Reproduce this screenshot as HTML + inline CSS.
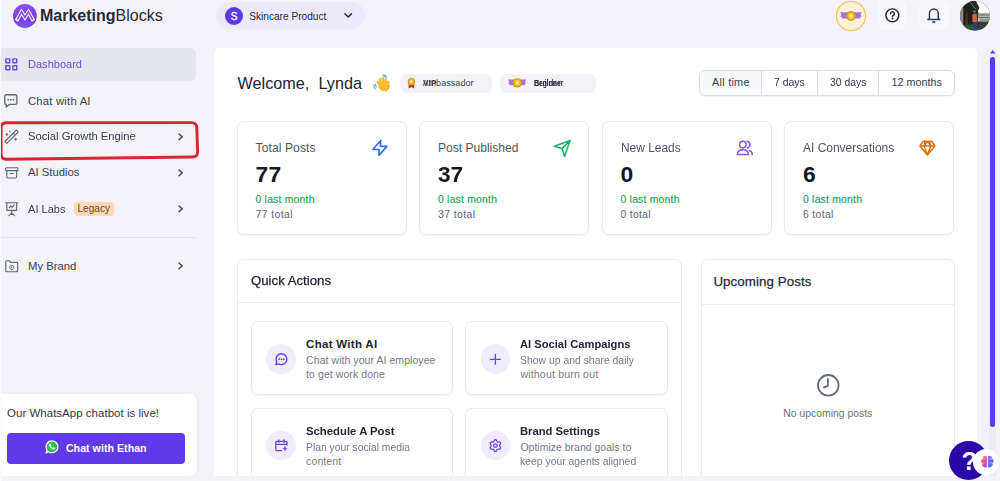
<!DOCTYPE html>
<html lang="en">
<head>
<meta charset="utf-8">
<title>MarketingBlocks Dashboard</title>
<style>
*{box-sizing:border-box;margin:0;padding:0}
html,body{width:1000px;height:481px;overflow:hidden}
body{background:#f3f2f8;font-family:"Liberation Sans",sans-serif;color:#1f2937;position:relative}
.a{position:absolute}
.t{position:absolute;white-space:pre;line-height:1;transform-origin:0 50%}
svg{position:absolute;overflow:visible}
.card{position:absolute;background:#fff;border:1px solid #e8eaef;border-radius:7px;box-shadow:0 1px 2px rgba(16,24,40,.05)}
.ic{position:absolute;width:29.5px;height:29.5px;border-radius:50%;background:#f0ebfd}
</style>
</head>
<body>

<div class="a" style="left:214px;top:47.500px;width:763px;height:428.500px;background:#fff;border-radius:5px 5px 0 0"></div>
<div class="a" style="left:988.600px;top:48px;width:7.800px;height:428px;background:#ececf1"></div>
<!-- logo -->
<svg style="left:12.8px;top:3.7px" width="23.8" height="23.8" viewBox="0 0 24 24">
<defs><linearGradient id="lg" x1="0" y1="0" x2="0.3" y2="1"><stop offset="0" stop-color="#9a4ff0"/><stop offset="1" stop-color="#6a35ee"/></linearGradient>
<clipPath id="lc"><circle cx="12" cy="12" r="12"/></clipPath></defs>
<circle cx="12" cy="12" r="12" fill="url(#lg)"/>
<path d="M0 17.300h24v7h-24z" fill="#7d4cf5" clip-path="url(#lc)"/>
<path d="M3.600 16.900 L8.600 7.900 L12.100 13.600 L15.600 7.900 L20.600 16.900" fill="none" stroke="#fff" stroke-width="3.700" stroke-linejoin="miter" stroke-miterlimit="10"/>
<path d="M4.300 15.700 L8.600 7.900 L12.100 13.600 L15.600 7.900 L19.900 15.700" fill="none" stroke="#8b4aec" stroke-width="1.700" stroke-linejoin="miter" stroke-miterlimit="10"/>
</svg>
<div class="t" style="left:40.00px;top:8.36px;font-size:16px;color:#262b3b;"><b>Marketing</b>Blocks</div>
<!-- Dashboard (active) -->
<div class="a" style="left:1px;top:48px;width:195.300px;height:33.300px;background:#e6e6f0;border-radius:0 6px 6px 0"></div>
<svg style="left:5px;top:58.200px" width="12.600" height="12.600" viewBox="0 0 13 13" fill="none" stroke="#6a4be8" stroke-width="1.500">
<rect x="0.900" y="0.900" width="4" height="4" rx="0.250"/><rect x="8.100" y="0.900" width="4" height="4" rx="0.250"/>
<rect x="0.900" y="8.100" width="4" height="4" rx="0.250"/><rect x="8.100" y="8.100" width="4" height="4" rx="0.250"/></svg>
<div class="t" style="left:28.00px;top:58.72px;font-size:11.3px;color:#6a4be8;transform:scaleX(0.977);">Dashboard</div>
<!-- Chat with AI -->
<svg style="left:4.400px;top:93.900px" width="13.700" height="13.700" viewBox="0 0 13.700 13.700" fill="none" stroke="#5d6877" stroke-width="1.350" stroke-linejoin="round">
<path d="M2.500 .8h8.700a1.700 1.700 0 0 1 1.700 1.700v6.200a1.700 1.700 0 0 1-1.700 1.700H5.200l-2.900 2.600v-2.600A1.700 1.700 0 0 1 .8 8.700V2.500A1.700 1.700 0 0 1 2.500 .8z"/>
<circle cx="4.200" cy="5.700" r=".85" fill="#5d6877" stroke="none"/><circle cx="6.850" cy="5.700" r=".85" fill="#5d6877" stroke="none"/><circle cx="9.500" cy="5.700" r=".85" fill="#5d6877" stroke="none"/></svg>
<div class="t" style="left:28.00px;top:96.02px;font-size:11.3px;color:#374152;letter-spacing:0.202px;">Chat with AI</div>
<!-- Social Growth Engine (highlighted) -->
<svg style="left:0;top:0" width="210" height="170" viewBox="0 0 210 170" fill="none"><path d="M1.100 128 Q1.100 122.800 6.300 122.800 L191.500 122.600 Q196.700 122.600 196.800 127.800 L197.600 151.600 Q197.700 156.900 192.400 157 L6.300 159.300 Q1.100 159.400 1.100 154.100 Z" stroke="#d8262f" stroke-width="2.900" stroke-linejoin="round"/></svg>
<svg style="left:4px;top:129px" width="16" height="16" viewBox="0 0 16 16" fill="none" stroke="#556070" stroke-width="1.100" stroke-linejoin="round">
<g transform="rotate(-45 7.500 7.800)"><rect x="-.7" y="6.400" width="16.400" height="2.800" rx=".5"/><path d="M11.400 6.400v2.800"/></g>
<path d="M2.900 4.100c.2.800.6 1.200 1.400 1.400-.8.200-1.200.6-1.400 1.400-.2-.800-.6-1.200-1.400-1.400.8-.2 1.200-.6 1.400-1.400z M11.600 8.800c.2.800.6 1.200 1.400 1.400-.8.200-1.200.6-1.400 1.400-.2-.8-.6-1.200-1.400-1.400.8-.2 1.200-.6 1.400-1.400z" fill="#556070" stroke-width=".4"/>
<circle cx="5.700" cy="2.300" r=".8" fill="#556070" stroke="none"/></svg>
<div class="t" style="left:28.00px;top:131.12px;font-size:11.3px;color:#374152;transform:scaleX(0.992);">Social Growth Engine</div>
<svg style="left:178.300px;top:133.20px" width="5.200" height="7.800" viewBox="0 0 5.200 7.800" fill="none" stroke="#4a4f5c" stroke-width="1.500" stroke-linecap="round" stroke-linejoin="round"><path d="M1 1 L4.200 3.900 L1 6.800"/></svg>
<!-- AI Studios -->
<svg style="left:4.500px;top:167px" width="13.500" height="11.800" viewBox="0 0 14 12" fill="none" stroke="#5d6877" stroke-width="1.200" stroke-linejoin="round" stroke-linecap="round">
<rect x=".7" y=".7" width="12.600" height="3" rx=".7"/><path d="M1.900 3.800v6.200a1.300 1.300 0 0 0 1.300 1.300h7.600a1.300 1.300 0 0 0 1.300-1.300V3.800 M5.400 6.600h3.200"/></svg>
<div class="t" style="left:28.00px;top:166.92px;font-size:11.3px;color:#374152;">AI Studios</div>
<svg style="left:178.300px;top:168.85px" width="5.200" height="7.800" viewBox="0 0 5.200 7.800" fill="none" stroke="#4a4f5c" stroke-width="1.500" stroke-linecap="round" stroke-linejoin="round"><path d="M1 1 L4.200 3.900 L1 6.800"/></svg>
<!-- AI Labs -->
<svg style="left:4.500px;top:202px" width="13.500" height="14.300" viewBox="0 0 14 15" fill="none" stroke="#5d6877" stroke-width="1.200" stroke-linejoin="round" stroke-linecap="round">
<path d="M.7 .8h12.600 M1.900 .8v8h10.200v-8 M7 8.800v3 M4 14.300l3-2.500 3 2.500 M4.400 6l1.600-1.800 1.500 1.300 2-2.300"/></svg>
<div class="t" style="left:28.00px;top:203.92px;font-size:11.3px;color:#374152;transform:scaleX(0.979);">AI Labs</div>
<div class="a" style="left:74px;top:201.800px;width:39.800px;height:14.200px;background:#fbd9b4;border-radius:3.500px"></div>
<div class="t" style="left:77.50px;top:203.92px;font-size:10.1px;color:#7a4517;">Legacy</div>
<svg style="left:178.300px;top:205.30px" width="5.200" height="7.800" viewBox="0 0 5.200 7.800" fill="none" stroke="#4a4f5c" stroke-width="1.500" stroke-linecap="round" stroke-linejoin="round"><path d="M1 1 L4.200 3.900 L1 6.800"/></svg>
<div class="a" style="left:1px;top:236.800px;width:195.500px;height:1px;background:#e1e2ea"></div>
<!-- My Brand -->
<svg style="left:4.500px;top:259.500px" width="13.500" height="12.500" viewBox="0 0 14 13" fill="none" stroke="#5d6877" stroke-width="1.200" stroke-linejoin="round" stroke-linecap="round">
<path d="M.8 10.800V2a1.200 1.200 0 0 1 1.200-1.200h2.600l1.300 1.600h6.100a1.200 1.200 0 0 1 1.200 1.200v7.200a1.400 1.400 0 0 1-1.400 1.400H2.200A1.400 1.400 0 0 1 .8 10.800z"/>
<path d="M7 10c-1.400-.6-2-1.400-2-2.500V6.300l2-.7 2 .7v1.200c0 1.100-.6 1.900-2 2.500z M7 7.300v.8" stroke-width="1"/></svg>
<div class="t" style="left:28.00px;top:260.72px;font-size:11.3px;color:#374152;">My Brand</div>
<svg style="left:178.300px;top:262.10px" width="5.200" height="7.800" viewBox="0 0 5.200 7.800" fill="none" stroke="#4a4f5c" stroke-width="1.500" stroke-linecap="round" stroke-linejoin="round"><path d="M1 1 L4.200 3.900 L1 6.800"/></svg>
<!-- WhatsApp card -->
<div class="a" style="left:1px;top:394px;width:195.500px;height:82px;background:#fff;border-radius:0 8px 6px 0;box-shadow:1px 1px 4px rgba(0,0,0,.05)"></div>
<div class="t" style="left:7.00px;top:407.62px;font-size:11.5px;color:#2f3747;letter-spacing:0.018px;">Our WhatsApp chatbot is live!</div>
<div class="a" style="left:7px;top:433px;width:178px;height:30.500px;background:#6239e9;border-radius:4px"></div>
<svg style="left:45.300px;top:440px" width="13.800" height="13.800" viewBox="0 0 15 15">
<path d="M7.600.3A7.100 7.100 0 0 0 1.500 11L.3 14.700l3.900-1.100A7.100 7.100 0 1 0 7.600.3z" fill="#fff"/>
<path d="M7.600 1.600a5.800 5.800 0 0 0-4.900 8.900l.2.300-.6 2 2.100-.6.300.2A5.800 5.800 0 1 0 7.600 1.600z" fill="#2bbf4f"/>
<path d="M5.300 4.100c.2-.3.700-.3.900 0l.7 1.300c.1.200 0 .5-.2.700l-.4.400c.5.900 1.200 1.600 2.100 2.100l.4-.4c.2-.2.500-.3.700-.2l1.300.7c.3.200.3.600.1.900-.5.700-1.400 1-2.200.8-2.100-.6-3.700-2.200-4.300-4.300-.2-.8.100-1.600.9-2z" fill="#fff"/></svg>
<div class="t" style="left:65.90px;top:442.62px;font-size:10.7px;color:#fff;font-weight:700;">Chat with Ethan</div>
<!-- product selector -->
<div class="a" style="left:216px;top:2px;width:148.500px;height:27.300px;background:#ece9fa;border-radius:14px"></div>
<div class="a" style="left:224.800px;top:7.200px;width:18px;height:18px;border-radius:50%;background:#5b3ae5"></div>
<div class="t" style="left:230.70px;top:11.78px;font-size:10px;color:#fff;-webkit-text-stroke:0.3px #fff;">S</div>
<div class="t" style="left:249.20px;top:11.60px;font-size:10.15px;color:#1f2937;letter-spacing:0.006px;">Skincare Product</div>
<svg style="left:344px;top:13.200px" width="8.400" height="5" viewBox="0 0 8.400 5" fill="none" stroke="#1f2430" stroke-width="1.500" stroke-linecap="round" stroke-linejoin="round"><path d="M.9 .8 L4.200 4 L7.500 .8"/></svg>
<!-- level badge -->
<div class="a" style="left:836px;top:1px;width:30px;height:29.800px;border-radius:50%;background:#fdf1d6;border:1.500px solid #ebc253"></div>
<svg style="left:839.500px;top:10.500px" width="22" height="10.200" viewBox="0 0 22 10.200">
<path d="M0 1.300h8v6.200H1.200l1.300-1.600L0 5.500l1.600-1.700z" fill="#a872d4"/><path d="M22 1.300h-8v6.200h6.800l-1.300-1.600 2.500-.4-1.600-1.700z" fill="#a872d4"/>
<circle cx="11" cy="5.100" r="5" fill="#d99a14"/><circle cx="11" cy="5.100" r="3.600" fill="#f2c338"/><circle cx="11" cy="4.900" r="1.600" fill="#fdeeb0"/></svg>
<!-- help -->
<div class="a" style="left:877.600px;top:0;width:29.800px;height:29.800px;border-radius:8px;background:#f7f7fb"></div>
<svg style="left:884.900px;top:8.100px" width="14.700" height="14.700" viewBox="0 0 15 15" fill="none" stroke="#262d40" stroke-width="1.500" stroke-linecap="round" stroke-linejoin="round"><circle cx="7.500" cy="7.500" r="6.600"/><path d="M5.600 5.900a1.950 1.950 0 1 1 2.800 1.750c-.6.300-.9.650-.9 1.250"/><circle cx="7.500" cy="10.900" r=".55" fill="#262d40" stroke-width=".6"/></svg>
<!-- bell -->
<div class="a" style="left:918.600px;top:0;width:30px;height:29.800px;border-radius:8px;background:#f7f7fb"></div>
<svg style="left:927px;top:7px" width="13.700" height="16.200" viewBox="0 0 14 16.500" fill="none" stroke="#2b3a55" stroke-width="1.500" stroke-linecap="round" stroke-linejoin="round"><path d="M2.500 11.800V6.600a4.500 4.500 0 0 1 9 0v5.200l1.500.9H1z"/><path d="M5.900 15.300h2.200"/></svg>
<!-- avatar -->
<svg style="left:960.300px;top:.85px" width="30" height="29.600" viewBox="0 0 30 29.600">
<defs><clipPath id="avc"><ellipse cx="15" cy="14.800" rx="15" ry="14.800"/></clipPath><filter id="avb" x="-10%" y="-10%" width="120%" height="120%"><feGaussianBlur stdDeviation=".45"/></filter></defs>
<g clip-path="url(#avc)"><rect width="30" height="29.600" fill="#1d201e"/><g filter="url(#avb)">
<path d="M15 -1 H31 V12.500 H18.500 Z" fill="#fbfbfa"/>
<path d="M8 -1 H15.500 L19.500 7 L17.500 10.500 Z" fill="#2a2c29"/>
<path d="M10 1.500 l6 7" stroke="#8f8e80" stroke-width=".8"/>
<rect x="18" y="11.800" width="13" height="9" fill="#b7b8b1"/>
<path d="M18.500 14h11M19 16.500h10M20 19h9" stroke="#5e625f" stroke-width=".9"/>
<rect x="18.500" y="20.800" width="10" height="7" fill="#3b3e3d"/>
<rect x="-1" y="7" width="4.300" height="16" fill="#8c8b7f"/>
<rect x="5.500" y="12" width="2.500" height="11" fill="#5a2a22"/>
<path d="M-1 23.500 H13 V31 H-1 Z M13 27 h8 v4 h-8z" fill="#2c5a34"/>
<rect x="12.700" y="20.500" width="5.200" height="9" fill="#2a4070"/>
<rect x="12.300" y="13" width="5" height="8" rx="1" fill="#d9623a"/>
<rect x="13.700" y="10.600" width="2" height="2.600" fill="#6e4231"/>
<rect x="13.300" y="9.600" width="2.300" height="1.500" fill="#4b90d8"/>
<rect x="16.800" y="11.500" width="1.500" height="5.500" fill="#4a2c22"/>
</g></g></svg>
<div class="t" style="left:237.50px;top:74.96px;font-size:16.2px;color:#20242f;letter-spacing:0.023px;">Welcome,  Lynda</div>
<svg style="left:372.500px;top:73.700px" width="17.500" height="17.500" viewBox="0 0 17.500 17.500">
<g stroke="#fbbd2a" stroke-width="2.700" stroke-linecap="round" fill="none"><path d="M7.400 11.500 L4.900 8.300"/><path d="M8.800 10 L6.800 5.500"/><path d="M10.800 9.300 L9.600 4.200"/><path d="M12.900 9.500 L12.600 5.300"/><path d="M15 12 L15.300 8.200"/></g>
<path d="M5.300 10.500 C6.500 8.500 13 7.500 15.800 9.800 C17 12 16.400 15.200 13.800 16.700 C11.200 18 8 17 6.500 14.700 C5.600 13.300 5 12 5.300 10.500z" fill="#fbbd2a"/>
<path d="M12.800 16.900c1.900-.8 3.300-2.500 3.500-4.800" stroke="#f2a21a" stroke-width="1" fill="none" stroke-linecap="round"/>
<path d="M9.700 1.200c1.400-.5 2.900.1 3.700 1.300 M10.800 2.700c.8-.2 1.500.1 2 .7 M1 11c-.4 1.300.1 2.700 1.300 3.500 M2.500 10.400c-.2.900.1 1.700.8 2.200" stroke="#6fb1ec" stroke-width="1.300" fill="none" stroke-linecap="round"/></svg>
<!-- rank chips -->
<div class="a" style="left:399.800px;top:73.500px;width:92.500px;height:19.800px;background:#f3f2f8;border-radius:6.500px"></div>
<svg style="left:407.200px;top:77.600px" width="8.800" height="10.600" viewBox="0 0 8.800 10.600"><path d="M1.600 6v4.400l2.800-1.500 2.800 1.500V6z" fill="#b5352c"/><circle cx="4.400" cy="3.700" r="3.700" fill="#cf9a12"/><circle cx="4.400" cy="3.700" r="2.500" fill="#e9bd3a"/><path d="M4.400 1.900l.55 1.200 1.300.15-.95.9.25 1.300-1.150-.65-1.150.65.25-1.300-.95-.9 1.300-.15z" fill="#fdf0b4"/></svg>
<div class="t" style="left:422.50px;top:78.78px;font-size:9px;color:#3a4152;letter-spacing:0.052px;">Ambassador</div>
<div class="t" style="left:422.80px;top:78.78px;font-size:9px;color:#3a4152;font-weight:700;transform:scaleX(0.930);">VIP</div>
<div class="a" style="left:500px;top:73.500px;width:96px;height:19.800px;background:#f3f2f8;border-radius:6.500px"></div>
<svg style="left:508px;top:78px" width="18.400" height="9.800" viewBox="0 0 18.400 9.800">
<path d="M0 1.500h7v5.800H1l1.100-1.500L0 5.300l1.400-1.500z" fill="#a872d4"/><path d="M18.400 1.500h-7v5.800h6l-1.100-1.500 2.100-.5-1.400-1.500z" fill="#a872d4"/>
<circle cx="9.200" cy="4.900" r="4.700" fill="#d99a14"/><circle cx="9.200" cy="4.900" r="3.300" fill="#f2c338"/><circle cx="9.200" cy="4.700" r="1.400" fill="#fdeeb0"/></svg>
<div class="t" style="left:533.60px;top:78.78px;font-size:9px;color:#2c3242;font-weight:700;transform:scaleX(0.751);">Beginner</div>
<div class="t" style="left:534.20px;top:78.78px;font-size:9px;color:#2c3242;transform:scaleX(0.964);">Builder</div>
<!-- time filter -->
<div class="a" style="left:699px;top:70px;width:256px;height:25.700px;border:1px solid #d8dbe3;border-radius:6px;background:#fff;overflow:hidden;box-shadow:0 1px 1px rgba(16,24,40,.04)">
<div class="a" style="left:0;top:0;width:61px;height:24px;background:#f8f9fb"></div>
<div class="a" style="left:60.900px;top:0;width:1px;height:24px;background:#d8dbe3"></div>
<div class="a" style="left:116.700px;top:0;width:1px;height:24px;background:#d8dbe3"></div>
<div class="a" style="left:177.900px;top:0;width:1px;height:24px;background:#d8dbe3"></div></div>
<div class="t" style="left:712.00px;top:77.27px;font-size:10.8px;color:#343b4b;letter-spacing:0.285px;">All time</div>
<div class="t" style="left:774.00px;top:77.27px;font-size:10.8px;color:#343b4b;transform:scaleX(0.968);">7 days</div>
<div class="t" style="left:829.80px;top:77.27px;font-size:10.8px;color:#343b4b;transform:scaleX(0.962);">30 days</div>
<div class="t" style="left:891.50px;top:77.27px;font-size:10.8px;color:#343b4b;">12 months</div>
<div class="card" style="left:236.8px;top:121px;width:170.200px;height:113.800px"></div>
<div class="t" style="left:255.50px;top:142.04px;font-size:12.05px;color:#4b5563;letter-spacing:0.106px;">Total Posts</div>
<div class="t" style="left:255.50px;top:162.94px;font-size:22.8px;color:#111827;font-weight:700;letter-spacing:0.391px;">77</div>
<div class="t" style="left:255.50px;top:194.87px;font-size:10.4px;color:#1a9f5c;letter-spacing:0.217px;-webkit-text-stroke:0.15px #1a9f5c;">0 last month</div>
<div class="t" style="left:255.50px;top:209.57px;font-size:10.4px;color:#5b6473;letter-spacing:0.415px;">77 total</div>
<svg style="left:371px;top:139px" width="18" height="18" viewBox="0 0 18 18" fill="none" stroke="#2a6ff0" stroke-width="1.600" stroke-linejoin="round"><path d="M9.700 1.500 L1.800 10.500 H8.200 L7.900 16.500 L15.900 7.400 H9.500 Z"/></svg>
<div class="card" style="left:419.3px;top:121px;width:170.200px;height:113.800px"></div>
<div class="t" style="left:438.00px;top:142.04px;font-size:12.05px;color:#4b5563;">Post Published</div>
<div class="t" style="left:438.00px;top:162.94px;font-size:22.8px;color:#111827;font-weight:700;transform:scaleX(0.994);">37</div>
<div class="t" style="left:438.00px;top:194.87px;font-size:10.4px;color:#1a9f5c;letter-spacing:0.217px;-webkit-text-stroke:0.15px #1a9f5c;">0 last month</div>
<div class="t" style="left:438.00px;top:209.57px;font-size:10.4px;color:#5b6473;letter-spacing:0.415px;">37 total</div>
<svg style="left:553px;top:139px" width="19" height="19" viewBox="0 0 19 19" fill="none" stroke="#21b264" stroke-width="1.600" stroke-linejoin="round" stroke-linecap="round"><path d="M17.100 1.500 L1.300 7.300 L9 9.600 L11.500 17.400 Z M17.100 1.500 L9 9.600"/></svg>
<div class="card" style="left:601.8px;top:121px;width:170.200px;height:113.800px"></div>
<div class="t" style="left:620.50px;top:142.04px;font-size:12.05px;color:#4b5563;transform:scaleX(0.989);">New Leads</div>
<div class="t" style="left:620.50px;top:162.94px;font-size:22.8px;color:#111827;font-weight:700;">0</div>
<div class="t" style="left:620.50px;top:194.87px;font-size:10.4px;color:#1a9f5c;letter-spacing:0.217px;-webkit-text-stroke:0.15px #1a9f5c;">0 last month</div>
<div class="t" style="left:620.50px;top:209.57px;font-size:10.4px;color:#5b6473;letter-spacing:0.281px;">0 total</div>
<svg style="left:736px;top:139px" width="18" height="18" viewBox="0 0 18 18" fill="none" stroke="#8456e0" stroke-width="1.500" stroke-linecap="round" stroke-linejoin="round"><circle cx="6.900" cy="5.600" r="3.300"/><path d="M1.400 15.600c0-3 2.300-4.800 5.500-4.800s5.500 1.800 5.500 4.800z"/><path d="M11.400 2.300a3.400 3.400 0 0 1 0 6.600 M13.400 11.500c1.700.7 2.800 2.100 2.900 4.100"/></svg>
<div class="card" style="left:784.3px;top:121px;width:170.200px;height:113.800px"></div>
<div class="t" style="left:803.00px;top:142.04px;font-size:12.05px;color:#4b5563;transform:scaleX(0.994);">AI Conversations</div>
<div class="t" style="left:803.00px;top:162.94px;font-size:22.8px;color:#111827;font-weight:700;">6</div>
<div class="t" style="left:803.00px;top:194.87px;font-size:10.4px;color:#1a9f5c;letter-spacing:0.217px;-webkit-text-stroke:0.15px #1a9f5c;">0 last month</div>
<div class="t" style="left:803.00px;top:209.57px;font-size:10.4px;color:#5b6473;letter-spacing:0.348px;">6 total</div>
<svg style="left:918px;top:139px" width="19" height="18" viewBox="0 0 19 18" fill="none" stroke="#e0700f" stroke-width="1.500" stroke-linejoin="round"><path d="M5.200 2.200h8.400l3.300 4.800L9.400 16 1.900 7z M1.900 7h15 M7.200 2.200 6 7l3.400 9 3.400-9-1.200-4.800 M6 7l3.400-4.800L12.800 7"/></svg>
<div class="card" style="left:236.800px;top:258.800px;width:445px;height:230px"></div>
<div class="t" style="left:250.50px;top:274.07px;font-size:13.3px;color:#20242f;-webkit-text-stroke:0.25px #20242f;transform:scaleX(0.993);">Quick Actions</div>
<div class="a" style="left:237.800px;top:302px;width:442.500px;height:1px;background:#eceef2"></div>
<div class="card" style="left:251.2px;top:321.2px;width:202.0px;height:74.200px"></div>
<div class="ic" style="left:266.30px;top:344.00px"></div>
<svg style="left:274.70px;top:352.60px" width="12.800" height="12.400" viewBox="0 0 12.800 12.400" fill="none" stroke="#6a3fe0" stroke-width="1.450" stroke-linejoin="round"><path d="M6.500 .8a5.400 5.400 0 1 1-2.700 10.100L.9 11.600l.8-2.800A5.400 5.400 0 0 1 6.500 .8z"/><circle cx="4.200" cy="6.200" r=".85" fill="#6a3fe0" stroke="none"/><circle cx="6.500" cy="6.200" r=".85" fill="#6a3fe0" stroke="none"/><circle cx="8.800" cy="6.200" r=".85" fill="#6a3fe0" stroke="none"/></svg>
<div class="t" style="left:306.10px;top:338.82px;font-size:11.5px;color:#232734;font-weight:700;letter-spacing:0.288px;">Chat With AI</div>
<div class="t" style="left:306.10px;top:355.12px;font-size:10.5px;color:#737a86;letter-spacing:0.059px;">Chat with your AI employee</div>
<div class="t" style="left:306.10px;top:369.02px;font-size:10.5px;color:#737a86;letter-spacing:0.071px;">to get work done</div>
<div class="card" style="left:465.0px;top:321.2px;width:203.0px;height:74.200px"></div>
<div class="ic" style="left:480.60px;top:344.00px"></div>
<svg style="left:489.00px;top:352.60px" width="12.800" height="12.400" viewBox="0 0 12.800 12.400" fill="none" stroke="#6a3fe0" stroke-width="1.300" stroke-linecap="round"><path d="M6.400 1.400v9.800M1.500 6.300h9.800"/></svg>
<div class="t" style="left:520.40px;top:338.82px;font-size:11.5px;color:#232734;font-weight:700;transform:scaleX(0.971);">AI Social Campaigns</div>
<div class="t" style="left:520.40px;top:355.12px;font-size:10.5px;color:#737a86;transform:scaleX(0.991);">Show up and share daily</div>
<div class="t" style="left:520.40px;top:369.02px;font-size:10.5px;color:#737a86;letter-spacing:0.199px;">without burn out</div>
<div class="card" style="left:251.2px;top:408.0px;width:202.0px;height:74.200px"></div>
<div class="ic" style="left:266.30px;top:430.80px"></div>
<svg style="left:274.70px;top:439.40px" width="12.800" height="12.400" viewBox="0 0 12.800 12.400" fill="none" stroke="#6a3fe0" stroke-width="1.300" stroke-linecap="round" stroke-linejoin="round"><path d="M12 6V3.600a1.200 1.200 0 0 0-1.200-1.200H2a1.200 1.200 0 0 0-1.200 1.200v6.800A1.200 1.200 0 0 0 2 11.600h4.500 M3.700 .8v2.600 M9.100 .8v2.600 M.8 5.400H12"/><path d="M10 7.600l.6 1.500 1.500.6-1.500.6-.6 1.500-.6-1.500-1.500-.6 1.500-.6z" fill="#6a3fe0" stroke-width=".5"/></svg>
<div class="t" style="left:306.10px;top:425.62px;font-size:11.5px;color:#232734;font-weight:700;transform:scaleX(0.986);">Schedule A Post</div>
<div class="t" style="left:306.10px;top:441.92px;font-size:10.5px;color:#737a86;transform:scaleX(0.984);">Plan your social media</div>
<div class="t" style="left:306.10px;top:455.82px;font-size:10.5px;color:#737a86;letter-spacing:0.108px;">content</div>
<div class="card" style="left:465.0px;top:408.0px;width:203.0px;height:74.200px"></div>
<div class="ic" style="left:480.60px;top:430.80px"></div>
<svg style="left:489.00px;top:439.40px" width="12.800" height="13.200" viewBox="0 0 12.800 13.200" fill="none" stroke="#6a3fe0" stroke-width="1.250" stroke-linejoin="round"><path d="M10.60 6.60 L10.65 6.97 L10.82 7.38 L11.28 7.91 L11.67 8.52 L11.68 9.06 L11.51 9.55 L11.18 9.94 L10.70 10.21 L9.97 10.17 L9.29 10.04 L8.85 10.10 L8.50 10.24 L8.20 10.47 L7.94 10.82 L7.71 11.48 L7.37 12.13 L6.91 12.41 L6.40 12.50 L5.89 12.41 L5.43 12.13 L5.09 11.48 L4.86 10.82 L4.60 10.47 L4.30 10.24 L3.95 10.10 L3.51 10.04 L2.83 10.17 L2.10 10.21 L1.62 9.94 L1.29 9.55 L1.12 9.06 L1.13 8.52 L1.52 7.91 L1.98 7.38 L2.15 6.97 L2.20 6.60 L2.15 6.23 L1.98 5.82 L1.52 5.29 L1.13 4.68 L1.12 4.14 L1.29 3.65 L1.62 3.26 L2.10 2.99 L2.83 3.03 L3.51 3.16 L3.95 3.10 L4.30 2.96 L4.60 2.73 L4.86 2.38 L5.09 1.72 L5.43 1.07 L5.89 0.79 L6.40 0.70 L6.91 0.79 L7.37 1.07 L7.71 1.72 L7.94 2.38 L8.20 2.73 L8.50 2.96 L8.85 3.10 L9.29 3.16 L9.97 3.03 L10.70 2.99 L11.18 3.26 L11.51 3.65 L11.68 4.14 L11.67 4.68 L11.28 5.29 L10.82 5.82 L10.65 6.23Z"/><circle cx="6.400" cy="6.600" r="1.800"/></svg>
<div class="t" style="left:520.40px;top:425.62px;font-size:11.5px;color:#232734;font-weight:700;transform:scaleX(0.977);">Brand Settings</div>
<div class="t" style="left:520.40px;top:441.92px;font-size:10.5px;color:#737a86;">Optimize brand goals to</div>
<div class="t" style="left:520.40px;top:455.82px;font-size:10.5px;color:#737a86;transform:scaleX(0.990);">keep your agents aligned</div>
<div class="card" style="left:700.500px;top:259px;width:254.300px;height:230px"></div>
<div class="t" style="left:713.40px;top:274.52px;font-size:13.3px;color:#242b3d;letter-spacing:0.091px;-webkit-text-stroke:0.25px #242b3d;">Upcoming Posts</div>
<div class="a" style="left:701.500px;top:304.200px;width:252.300px;height:1px;background:#eceef2"></div>
<svg style="left:816.500px;top:374.200px" width="22.600" height="22.600" viewBox="0 0 22.600 22.600" fill="none" stroke="#636b7a" stroke-width="1.800" stroke-linecap="round" stroke-linejoin="round"><circle cx="11.300" cy="11.300" r="10.300"/><path d="M10.900 4.800V11.800L7 13.400"/></svg>
<div class="t" style="left:783.30px;top:409.07px;font-size:10.4px;color:#6b7280;">No upcoming posts</div>
<svg style="left:990px;top:50.200px" width="5.500" height="3.600" viewBox="0 0 5.500 3.600"><path d="M2.750 0L5.500 3.600H0z" fill="#5b3de8"/></svg>
<div class="a" style="left:990.300px;top:56.500px;width:4.600px;height:370.500px;background:#5b3de8;border-radius:2.300px"></div>
<div class="a" style="left:0;top:476px;width:1000px;height:5px;background:#f2f2f7"></div>
<div class="a" style="left:0;top:0;width:1px;height:481px;background:#fafafc"></div>
<div class="a" style="left:948.700px;top:441.200px;width:39px;height:39px;border-radius:50%;background:#2a07a6"></div>
<div class="t" style="left:961.40px;top:449.39px;font-size:25.5px;color:#fff;font-weight:700;">?</div>
<div class="a" style="left:972.800px;top:448.800px;width:26.200px;height:26.200px;border-radius:50%;background:#fff"></div>
<svg style="left:979.800px;top:455.300px" width="14.800" height="13.800" viewBox="0 0 14.200 13.200">
<defs><linearGradient id="b1" x1="0" y1="0" x2="0.400" y2="1"><stop offset="0" stop-color="#f6a23a"/><stop offset=".55" stop-color="#ee4f8f"/><stop offset="1" stop-color="#c145d8"/></linearGradient>
<linearGradient id="b2" x1="0" y1="0" x2="0.400" y2="1"><stop offset="0" stop-color="#b45cf0"/><stop offset="1" stop-color="#3f78f2"/></linearGradient></defs>
<path d="M6.600 1.200C4.400 -.2 2.300 1.300 2.700 3.300.7 4.300.5 6.900 2 8 1.500 10.700 3.900 12.600 6.600 11.700z" fill="url(#b1)"/>
<path d="M7.600 1.200c2.200-1.400 4.300.1 3.900 2.100 2 1 2.200 3.600.7 4.700.5 2.700-1.900 4.600-4.600 3.700z" fill="url(#b2)"/>
<path d="M2.700 3.300c.9 0 1.700.4 2.100 1.100 M2 8c.7-.5 1.500-.6 2.300-.3 M11.500 3.300c-.9 0-1.700.4-2.100 1.100 M12.200 8c-.7-.5-1.500-.6-2.300-.3" stroke="#fff" stroke-width=".6" fill="none" opacity=".85"/></svg>
</body>
</html>
